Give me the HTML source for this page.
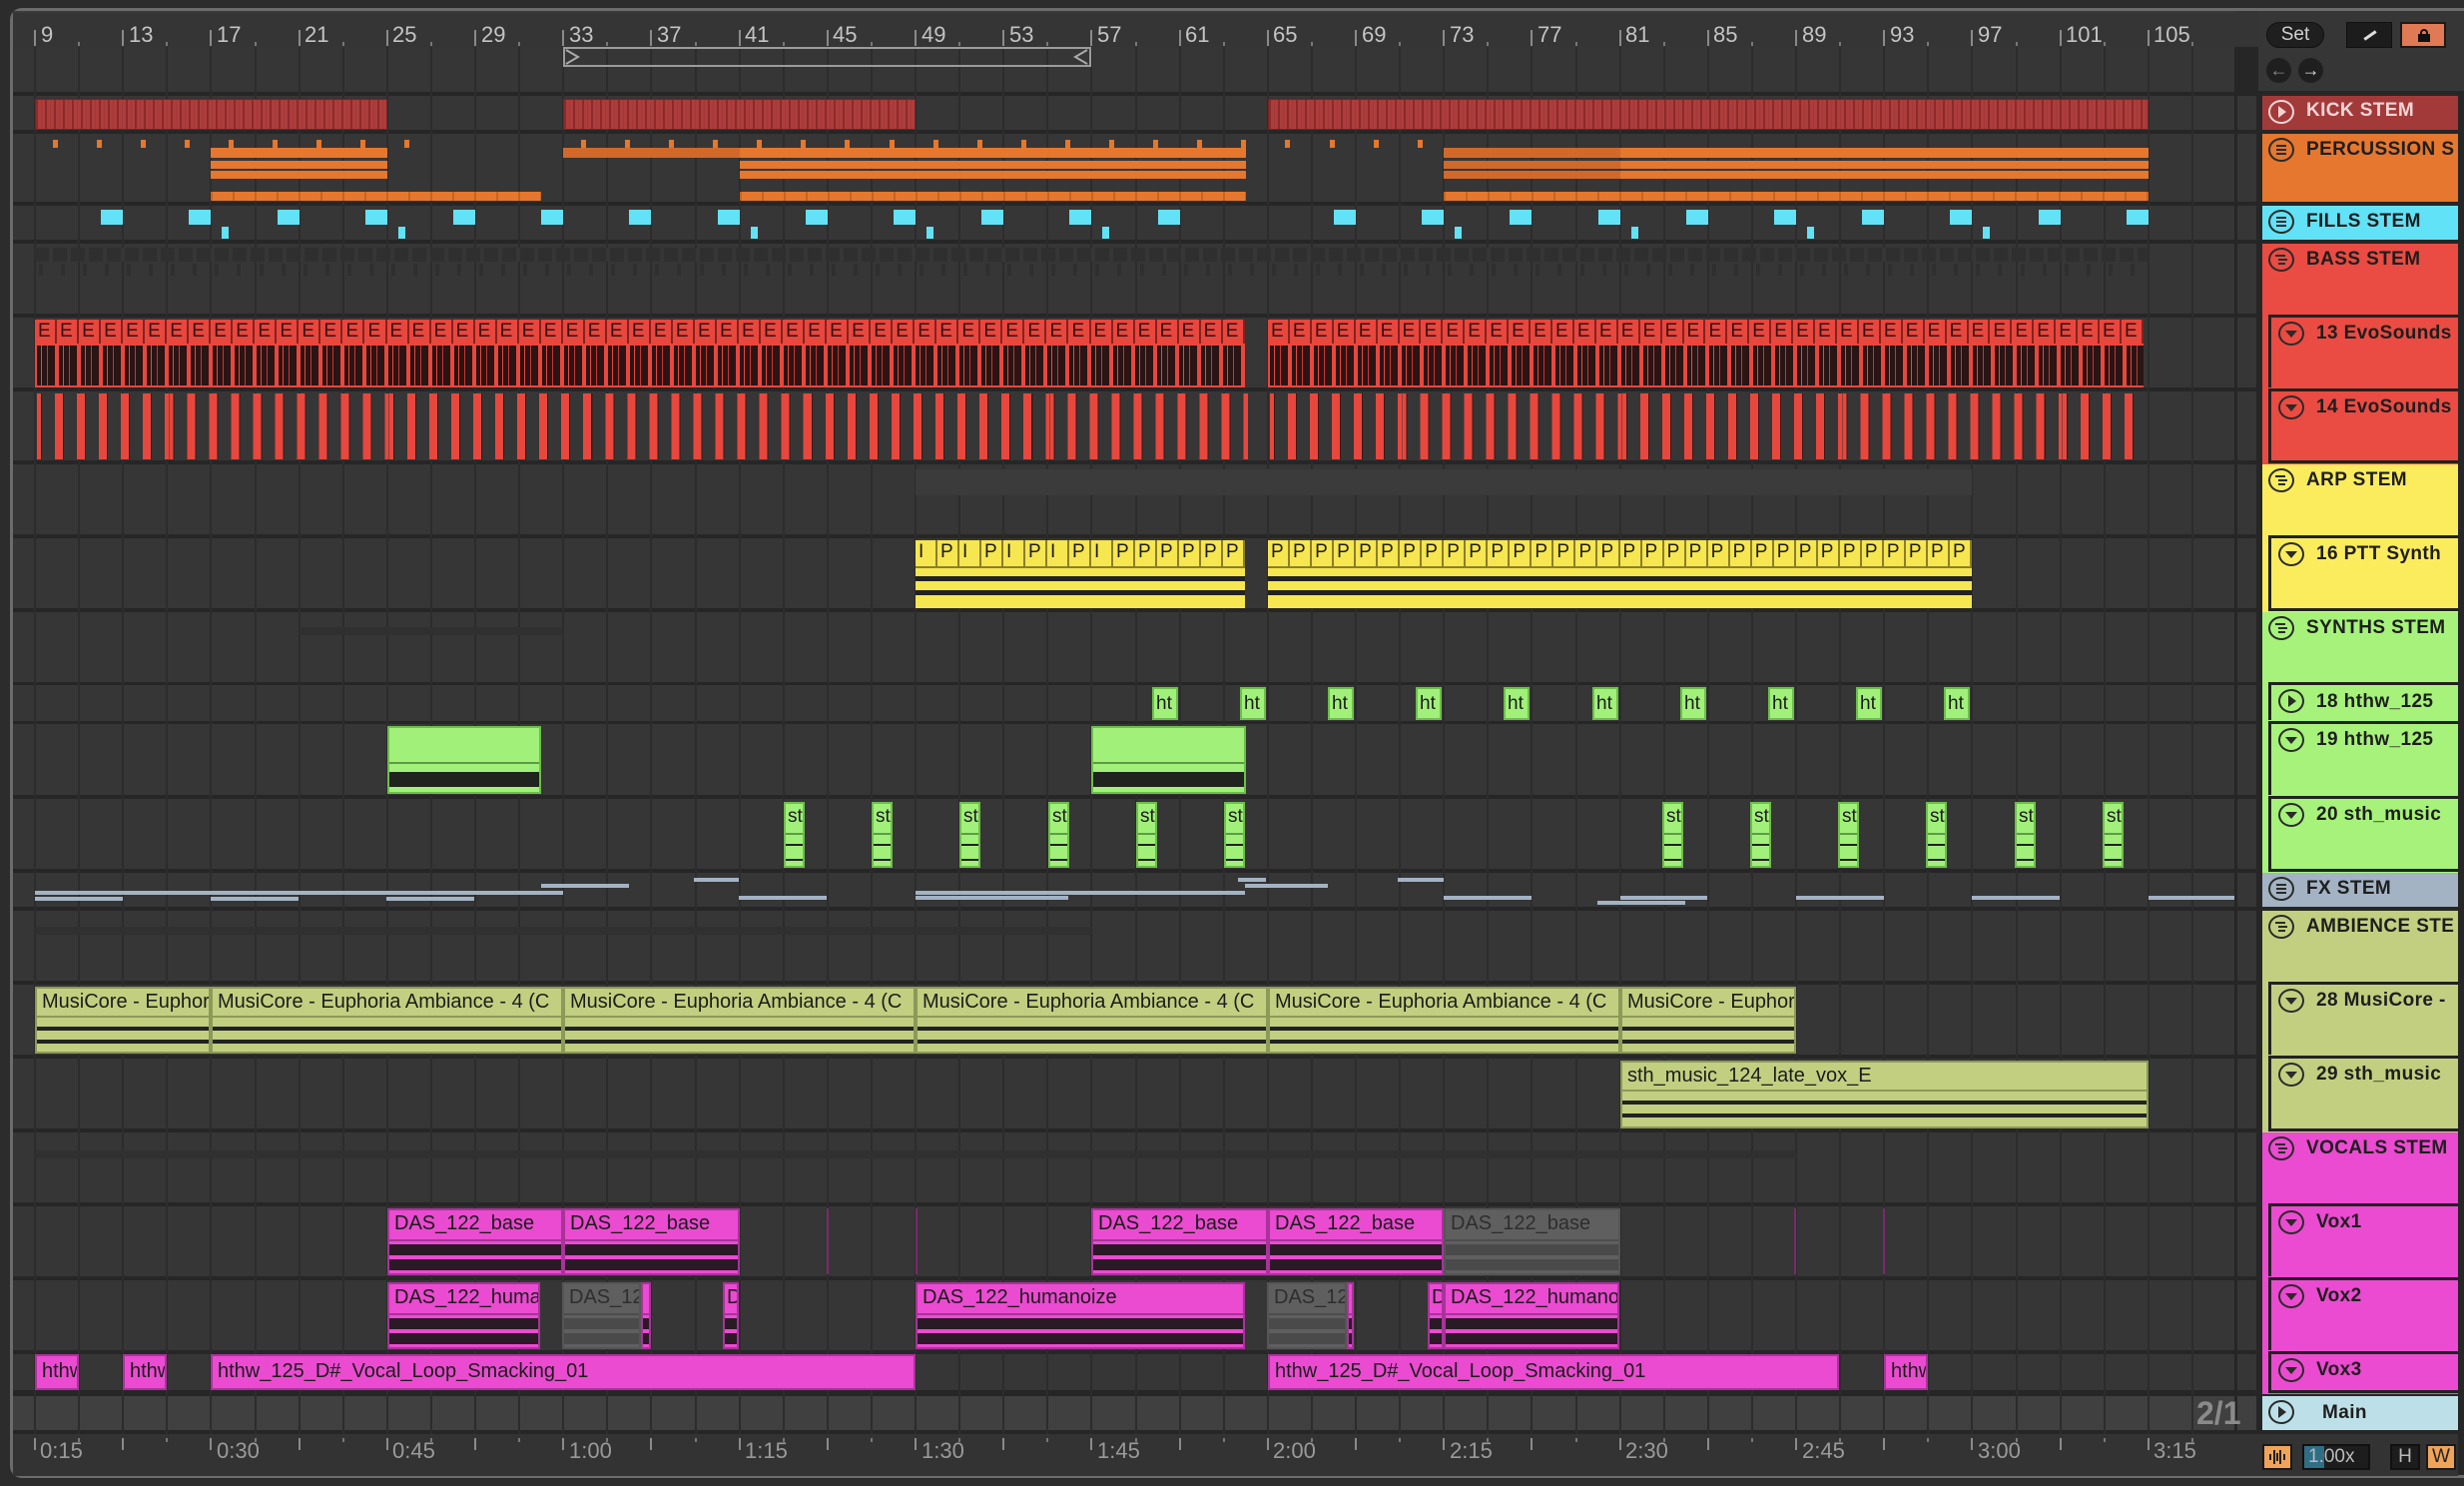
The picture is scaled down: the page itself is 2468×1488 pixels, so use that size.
<!DOCTYPE html>
<html><head><meta charset="utf-8">
<style>
*{margin:0;padding:0;box-sizing:border-box}
body{width:2468px;height:1488px;background:#2c2c2c;position:relative;overflow:hidden;font-family:"Liberation Sans Narrow","Liberation Sans",sans-serif}
.a{position:absolute}
.c{position:absolute;overflow:hidden;white-space:nowrap;font-size:20px;color:#1c1c1c;line-height:26px}
.lab{padding-left:5px;height:27px}
.h{position:absolute;overflow:hidden;white-space:nowrap;font-family:"Liberation Sans","DejaVu Sans",sans-serif;font-weight:bold;font-size:19px;color:#1e1e1e;letter-spacing:.4px}
.rl{position:absolute;top:22px;font-size:22px;color:#c4c4c4;font-family:"Liberation Sans Narrow","Liberation Sans",sans-serif}
.tl{position:absolute;top:1440px;font-size:22px;color:#9a9a9a}
.flex{display:flex}
.flex i{flex:1;font-style:normal;border-right:2px solid rgba(90,20,20,.7);padding-left:3px;height:24px;line-height:24px;overflow:hidden}
</style></head><body>
<div class="a" style="left:10px;top:8px;width:2470px;height:1472px;border:3px solid #6c6c6c;border-right:none;border-radius:12px 0 0 12px;background:#262626"></div>
<div class="a" id="ruler" style="left:13px;top:11px;width:2250px;height:36px;background:#353535"></div>
<div class="a" style="left:2262px;top:11px;width:206px;height:80px;background:#363636"></div>
<div id="g"></div>

<span class="rl" style="left:41px">9</span><span class="rl" style="left:129px">13</span><span class="rl" style="left:217px">17</span><span class="rl" style="left:305px">21</span><span class="rl" style="left:393px">25</span><span class="rl" style="left:482px">29</span><span class="rl" style="left:570px">33</span><span class="rl" style="left:658px">37</span><span class="rl" style="left:746px">41</span><span class="rl" style="left:834px">45</span><span class="rl" style="left:923px">49</span><span class="rl" style="left:1011px">53</span><span class="rl" style="left:1099px">57</span><span class="rl" style="left:1187px">61</span><span class="rl" style="left:1275px">65</span><span class="rl" style="left:1364px">69</span><span class="rl" style="left:1452px">73</span><span class="rl" style="left:1540px">77</span><span class="rl" style="left:1628px">81</span><span class="rl" style="left:1716px">85</span><span class="rl" style="left:1805px">89</span><span class="rl" style="left:1893px">93</span><span class="rl" style="left:1981px">97</span><span class="rl" style="left:2069px">101</span><span class="rl" style="left:2157px">105</span>

<span class="tl" style="left:40px">0:15</span><span class="tl" style="left:217px">0:30</span><span class="tl" style="left:393px">0:45</span><span class="tl" style="left:570px">1:00</span><span class="tl" style="left:746px">1:15</span><span class="tl" style="left:923px">1:30</span><span class="tl" style="left:1099px">1:45</span><span class="tl" style="left:1275px">2:00</span><span class="tl" style="left:1452px">2:15</span><span class="tl" style="left:1628px">2:30</span><span class="tl" style="left:1805px">2:45</span><span class="tl" style="left:1981px">3:00</span><span class="tl" style="left:2157px">3:15</span>

<!-- 13 EvoSounds -->
<div class="c flex" style="left:35px;top:320px;width:1212px;height:68px;background:#e8473e;font-size:19px;color:#3a1010"><i>E</i><i>E</i><i>E</i><i>E</i><i>E</i><i>E</i><i>E</i><i>E</i><i>E</i><i>E</i><i>E</i><i>E</i><i>E</i><i>E</i><i>E</i><i>E</i><i>E</i><i>E</i><i>E</i><i>E</i><i>E</i><i>E</i><i>E</i><i>E</i><i>E</i><i>E</i><i>E</i><i>E</i><i>E</i><i>E</i><i>E</i><i>E</i><i>E</i><i>E</i><i>E</i><i>E</i><i>E</i><i>E</i><i>E</i><i>E</i><i>E</i><i>E</i><i>E</i><i>E</i><i>E</i><i>E</i><i>E</i><i>E</i><i>E</i><i>E</i><i>E</i><i>E</i><i>E</i><i>E</i><i>E</i></div>
<div class="c flex" style="left:1270px;top:320px;width:877px;height:68px;background:#e8473e;font-size:19px;color:#3a1010"><i>E</i><i>E</i><i>E</i><i>E</i><i>E</i><i>E</i><i>E</i><i>E</i><i>E</i><i>E</i><i>E</i><i>E</i><i>E</i><i>E</i><i>E</i><i>E</i><i>E</i><i>E</i><i>E</i><i>E</i><i>E</i><i>E</i><i>E</i><i>E</i><i>E</i><i>E</i><i>E</i><i>E</i><i>E</i><i>E</i><i>E</i><i>E</i><i>E</i><i>E</i><i>E</i><i>E</i><i>E</i><i>E</i><i>E</i><i>E</i></div>
<div class="a evw" style="left:35px;top:346px;width:1212px;height:40px"></div>
<div class="a evw" style="left:1270px;top:346px;width:877px;height:40px"></div>

<!-- 16 PTT -->
<div class="c flex ptt" style="left:917px;top:541px;width:330px;height:68px"><i>I</i><i>P</i><i>I</i><i>P</i><i>I</i><i>P</i><i>I</i><i>P</i><i>I</i><i>P</i><i>P</i><i>P</i><i>P</i><i>P</i><i>P</i></div>
<div class="c flex ptt" style="left:1270px;top:541px;width:705px;height:68px"><i>P</i><i>P</i><i>P</i><i>P</i><i>P</i><i>P</i><i>P</i><i>P</i><i>P</i><i>P</i><i>P</i><i>P</i><i>P</i><i>P</i><i>P</i><i>P</i><i>P</i><i>P</i><i>P</i><i>P</i><i>P</i><i>P</i><i>P</i><i>P</i><i>P</i><i>P</i><i>P</i><i>P</i><i>P</i><i>P</i><i>P</i><i>P</i></div>

<div class="c ht" style="left:1154px">ht</div><div class="c ht" style="left:1242px">ht</div><div class="c ht" style="left:1330px">ht</div><div class="c ht" style="left:1418px">ht</div><div class="c ht" style="left:1506px">ht</div><div class="c ht" style="left:1595px">ht</div><div class="c ht" style="left:1683px">ht</div><div class="c ht" style="left:1771px">ht</div><div class="c ht" style="left:1859px">ht</div><div class="c ht" style="left:1947px">ht</div>

<div class="c st" style="left:785px">st</div><div class="c st" style="left:873px">st</div><div class="c st" style="left:961px">st</div><div class="c st" style="left:1050px">st</div><div class="c st" style="left:1138px">st</div><div class="c st" style="left:1226px">st</div><div class="c st" style="left:1665px">st</div><div class="c st" style="left:1753px">st</div><div class="c st" style="left:1841px">st</div><div class="c st" style="left:1929px">st</div><div class="c st" style="left:2018px">st</div><div class="c st" style="left:2106px">st</div>

<div class="c mc" style="left:35px;width:176px"><div class="lab">MusiCore - Euphoria Ambiance - 4 (C</div></div>
<div class="c mc" style="left:211px;width:353px"><div class="lab">MusiCore - Euphoria Ambiance - 4 (C</div></div>
<div class="c mc" style="left:564px;width:353px"><div class="lab">MusiCore - Euphoria Ambiance - 4 (C</div></div>
<div class="c mc" style="left:917px;width:353px"><div class="lab">MusiCore - Euphoria Ambiance - 4 (C</div></div>
<div class="c mc" style="left:1270px;width:353px"><div class="lab">MusiCore - Euphoria Ambiance - 4 (C</div></div>
<div class="c mc" style="left:1623px;width:176px"><div class="lab">MusiCore - Euphoria Ambiance - 4 (C</div></div>
<div class="c mc" style="left:1623px;width:529px;top:1062px;height:68px"><div class="lab">sth_music_124_late_vox_E</div></div>

<div class="c vx" style="left:388px;width:176px;top:1210px"><div class="lab">DAS_122_base</div></div>
<div class="c vx" style="left:564px;width:177px;top:1210px"><div class="lab">DAS_122_base</div></div>
<div class="c vx" style="left:1093px;width:177px;top:1210px"><div class="lab">DAS_122_base</div></div>
<div class="c vx" style="left:1270px;width:176px;top:1210px"><div class="lab">DAS_122_base</div></div>
<div class="c vx gr" style="left:1446px;width:177px;top:1210px"><div class="lab">DAS_122_base</div></div>
<div class="c vx" style="left:388px;width:153px;top:1284px"><div class="lab">DAS_122_humanoize</div></div>
<div class="c vx gr" style="left:563px;width:79px;top:1284px"><div class="lab">DAS_122_humanoize</div></div>
<div class="c vx" style="left:642px;width:10px;top:1284px"><div class="lab"></div></div>
<div class="c vx" style="left:724px;width:16px;top:1284px"><div class="lab" style="padding-left:2px">D</div></div>
<div class="c vx" style="left:917px;width:330px;top:1284px"><div class="lab">DAS_122_humanoize</div></div>
<div class="c vx gr" style="left:1269px;width:80px;top:1284px"><div class="lab">DAS_122_humanoize</div></div>
<div class="c vx" style="left:1349px;width:7px;top:1284px"><div class="lab"></div></div>
<div class="c vx" style="left:1430px;width:16px;top:1284px"><div class="lab" style="padding-left:2px">D</div></div>
<div class="c vx" style="left:1446px;width:176px;top:1284px"><div class="lab">DAS_122_humanoize</div></div>
<div class="c v3" style="left:35px;width:44px">hthw_125_D#_Vocal_Loop_Smacking_01</div>
<div class="c v3" style="left:123px;width:44px">hthw_125_D#_Vocal_Loop_Smacking_01</div>
<div class="c v3" style="left:211px;width:706px">hthw_125_D#_Vocal_Loop_Smacking_01</div>
<div class="c v3" style="left:1270px;width:572px">hthw_125_D#_Vocal_Loop_Smacking_01</div>
<div class="c v3" style="left:1887px;width:44px">hthw_125_D#_Vocal_Loop_Smacking_01</div>

<div class="a" style="left:2200px;top:1398px;font-family:'Liberation Sans',sans-serif;font-weight:bold;font-size:32px;color:#8a8a8a;line-height:34px">2/1</div>

<div id="hd"></div>
<div class="h" style="left:2310px;top:100px;color:#f2d4d4">KICK STEM</div>
<div class="h" style="left:2310px;top:139px">PERCUSSION S</div>
<div class="h" style="left:2310px;top:211px">FILLS STEM</div>
<div class="h" style="left:2310px;top:249px">BASS STEM</div>
<div class="h" style="left:2320px;top:323px">13 EvoSounds</div>
<div class="h" style="left:2320px;top:397px">14 EvoSounds</div>
<div class="h" style="left:2310px;top:470px">ARP STEM</div>
<div class="h" style="left:2320px;top:544px">16 PTT Synth</div>
<div class="h" style="left:2310px;top:618px">SYNTHS STEM</div>
<div class="h" style="left:2320px;top:692px">18 hthw_125</div>
<div class="h" style="left:2320px;top:730px">19 hthw_125</div>
<div class="h" style="left:2320px;top:805px">20 sth_music</div>
<div class="h" style="left:2310px;top:879px">FX STEM</div>
<div class="h" style="left:2310px;top:917px">AMBIENCE STE</div>
<div class="h" style="left:2320px;top:991px">28 MusiCore -</div>
<div class="h" style="left:2320px;top:1065px">29 sth_music</div>
<div class="h" style="left:2310px;top:1139px">VOCALS STEM</div>
<div class="h" style="left:2320px;top:1213px">Vox1</div>
<div class="h" style="left:2320px;top:1287px">Vox2</div>
<div class="h" style="left:2320px;top:1361px">Vox3</div>
<div class="h" style="left:2326px;top:1404px">Main</div>

<div class="a" style="left:2270px;top:22px;width:58px;height:26px;border-radius:13px;background:#1f1f1f;border:1px solid #111;color:#d0d0d0;font-family:'Liberation Sans',sans-serif;font-size:19px;text-align:center;line-height:24px">Set</div>
<div class="a" style="left:2350px;top:22px;width:46px;height:26px;background:#1c1c1c;border:1px solid #111"><div class="a" style="left:16px;top:11px;width:14px;height:3px;background:#ddd;transform:rotate(-35deg)"></div></div>
<div class="a" style="left:2404px;top:22px;width:46px;height:26px;background:#e07a55;border:2px solid #1a1a1a"><div class="a" style="left:16px;top:10px;width:12px;height:8px;background:#111"></div><div class="a" style="left:18px;top:5px;width:8px;height:7px;border:2px solid #111;border-bottom:none;border-radius:4px 4px 0 0"></div></div>
<div class="a" style="left:2270px;top:58px;width:25px;height:25px;border-radius:50%;background:#1f1f1f;color:#888;font-size:18px;text-align:center;line-height:24px">←</div>
<div class="a" style="left:2302px;top:58px;width:25px;height:25px;border-radius:50%;background:#1f1f1f;color:#ddd;font-size:18px;text-align:center;line-height:24px">→</div>

<div class="a" style="left:2266px;top:1446px;width:30px;height:26px;background:#f0a45a;border:2px solid #1a1a1a"><svg width="26" height="22" style="position:absolute;left:0;top:0"><path d="M6 8V14M10 4V18M13 7V15M16 4V18M20 8V14" stroke="#222" stroke-width="2"/></svg></div>
<div class="a" style="left:2306px;top:1446px;width:68px;height:26px;background:#1d1d1d;border:2px solid #111"><div class="a" style="left:0;top:0;width:20px;height:22px;background:#2f6f86"></div><span class="a" style="left:4px;top:0;font-family:'Liberation Sans',sans-serif;font-size:19px;color:#bbb;line-height:22px">1.00x</span></div>
<div class="a" style="left:2394px;top:1446px;width:30px;height:26px;background:#1d1d1d;border:2px solid #111;color:#bbb;font-family:'Liberation Sans',sans-serif;font-size:19px;text-align:center;line-height:22px">H</div>
<div class="a" style="left:2430px;top:1446px;width:30px;height:26px;background:#f0a45a;border:2px solid #1a1a1a;color:#222;font-family:'Liberation Sans',sans-serif;font-size:19px;text-align:center;line-height:22px">W</div>

<style>
.evw{background:repeating-linear-gradient(90deg,#e8473e 0 2px,#2a1414 2px 6px,#e8473e 6px 7px,#2a1414 7px 12px,#c33 12px 13px,#2a1414 13px 20px,#e8473e 20px 22px)}
.ptt{background:linear-gradient(180deg,#f6e650 0 26px,#8a7f2c 26px 28px,#f6e650 28px 36px,#222 36px 41px,#f6e650 41px 50px,#222 50px 55px,#f6e650 55px);font-size:19px}
.ptt i{border-right:2px solid #8a7f2c;height:26px}
.ht{top:688px;width:26px;height:33px;background:#a1f07a;border:2px solid #6dbf4b;font-size:19px;padding-left:2px;line-height:30px}
.st{top:803px;width:21px;height:66px;border:2px solid #6dbf4b;font-size:19px;padding-left:2px;background:linear-gradient(180deg,#a1f07a 0 29px,#5d9a46 29px 31px,#a1f07a 31px 40px,#222 40px 42px,#a1f07a 42px 55px,#222 55px 57px,#a1f07a 57px)}
.mc{top:988px;height:67px;border:2px solid #8c9958;background:linear-gradient(180deg,#c2cf80 0 27px,#8c9958 27px 29px,#c2cf80 29px 38px,#222 38px 42px,#c2cf80 42px 51px,#222 51px 55px,#c2cf80 55px)}
.vx{height:67px;border:2px solid #a8339a;background:linear-gradient(180deg,#ea4bd0 0 29px,#a8339a 29px 31px,#ea4bd0 31px 34px,#2a1a26 34px 45px,#ea4bd0 45px 49px,#2a1a26 49px 60px,#ea4bd0 60px)}
.vx.gr{border-color:#555;background:linear-gradient(180deg,#5f5f5f 0 29px,#4d4d4d 29px 31px,#5f5f5f 31px 34px,#4a4a4a 34px 45px,#5f5f5f 45px 49px,#4a4a4a 49px 60px,#5f5f5f 60px);color:#2e2e2e}
.v3{top:1356px;height:36px;background:#ea4bd0;border:2px solid #a8339a;padding-left:5px;line-height:30px}
</style>

<script>
function X(b){return 35+(b-9)*22.05}
function R(x,y,w,h,bg,ex,parent){var d=document.createElement('div');d.className='a';d.style.cssText='left:'+x+'px;top:'+y+'px;width:'+w+'px;height:'+h+'px;background:'+bg+';'+(ex||'');(parent||document.getElementById('g')).appendChild(d);return d}
var rows=[[96,130],[134,202],[206,240],[244,314],[318,388],[392,461],[465,535],[539,609],[613,683],[686,722],[725,796],[800,870],[874,908],[912,982],[986,1056],[1060,1130],[1134,1204],[1208,1278],[1282,1352],[1356,1392],[1398,1432]];
R(13,47,2225,45,'#363636');
rows.forEach(function(r,i){R(13,r[0],2225,r[1]-r[0],i==20?'#404040':'#363636');R(2241,r[0],19,r[1]-r[0],i==20?'#404040':'#363636');});
R(13,1436,2449,42,'#333333');
for(var b=9;b<=109;b+=2){var x=X(b);if(x>2236)break;
 R(x-1,47,2,1389,'#2c2c2c');
 if((b-9)%4==0){R(x-1,30,2,16,'#8a8a8a');R(x-1,1440,2,12,'#8a8a8a');}
 else{R(x-1,42,2,4,'#777');R(x-1,1440,2,4,'#777');}
}
R(13,11,2225,2,'#3a3a3a');
var lb=R(X(33),47,X(57)-X(33),20,'transparent','border:2px solid #9c9c9c');
lb.innerHTML='<svg width="16" height="18" style="position:absolute;left:0;top:0"><path d="M1 1 L13 8 L1 15" stroke="#aaa" stroke-width="2" fill="none"/></svg><svg width="16" height="18" style="position:absolute;right:0;top:0"><path d="M14 1 L2 8 L14 15" stroke="#aaa" stroke-width="2" fill="none"/></svg>';
[[9,25],[33,49],[65,105]].forEach(function(s){R(X(s[0]),99,X(s[1])-X(s[0]),31,'repeating-linear-gradient(90deg,#8c2a2a 0 2px,#ad3d3d 2px 5px,#a33838 5px 6px,#ad3d3d 6px 9px)','border:1px solid #7a2222')});
var O='#e5772e',OD='#d0692a';
var mk=[];for(var b=9.8;b<26;b+=2)mk.push(b);for(var b=33.8;b<64;b+=2)mk.push(b);for(var b=65.8;b<72;b+=2)mk.push(b);
mk.forEach(function(b){R(X(b),140,5,8,O)});
function stack(a,b,c){R(X(a),148,X(b)-X(a),10,c||O);R(X(a),161,X(b)-X(a),8,c||O);R(X(a),171,X(b)-X(a),8,c||O);}
stack(17,25);R(X(33),148,X(41)-X(33),10,OD);stack(41,64);stack(73,105,OD);stack(81,105);
function strip(a,b){R(X(a),192,X(b)-X(a),9,'repeating-linear-gradient(90deg,#c9641f 0 2px,'+O+' 2px 22px)')}
strip(17,32);strip(41,64);strip(73,105);
for(var b=12;b<=104;b+=4){if(b==64)continue;R(X(b),210,22,15,'#62e2f6')}
[17.5,25.5,41.5,49.5,57.5,73.5,81.5,89.5,97.5].forEach(function(b){R(X(b),227,7,12,'#62e2f6')});
R(X(9),248,X(105)-X(9),14,'repeating-linear-gradient(90deg,#2f2f2f 0 14px,#363636 14px 18px)');
for(var b=9;b<105;b+=1)R(X(b)+4,264,4,12,'#2f2f2f');
[[9,64],[65,104.6]].forEach(function(s){R(X(s[0])+2,394,X(s[1])-X(s[0]),66,'repeating-linear-gradient(90deg,#e8473e 0 4px,#3a1a18 4px 5px,transparent 5px 18px,#e8473e 18px 22px,transparent 22px 22.05px)')});
R(X(49),470,X(97)-X(49),26,'#3b3b3b');
R(X(21),628,X(33)-X(21),8,'#303030');
[[25,32],[57,64]].forEach(function(s){R(X(s[0]),727,X(s[1])-X(s[0]),68,'linear-gradient(180deg,#a1f07a 0 34px,#5d9a46 34px 36px,#a1f07a 36px 44px,#1f241e 44px 59px,#a1f07a 59px)','border:2px solid #6dbf4b')});
var F='#a3b3c4';
[[35,564,892],[35,123,898],[211,299,898],[387,475,898],[542,630,885],[695,740,879],[740,828,897],[917,1247,892],[917,1070,897],[1240,1268,879],[1247,1330,885],[1400,1446,879],[1446,1534,897],[1600,1688,902],[1623,1710,897],[1799,1887,897],[1975,2063,897],[2152,2238,897]].forEach(function(l){R(l[0],l[2],l[1]-l[0],4,F)});
R(X(9),928,X(57)-X(9),8,'#303030');R(X(9),1152,X(89)-X(9),8,'#303030');
[828,917,1797,1886].forEach(function(x){R(x,1210,2,66,'#7a2a6e')});
var H=document.getElementById('hd');
function hdr(y1,y2,c,ind,pc,icon){
 if(ind){R(2266,y1-4,196,y2-y1+8,pc,'',H);R(2272,y1-3,190,y2-y1+6,'#222','',H);R(2275,y1,187,y2-y1,c,'',H);var ic=R(2282,y1+4,26,24,'transparent','border:2px solid #2a2a2a;border-radius:50%',H);}
 else{R(2266,y1,196,y2-y1,c,'',H);var ic=R(2272,y1+4,26,24,'transparent','border:2px solid '+(icon=='pk'?'#f2d4d4':'#2a2a2a')+';border-radius:50%',H);}
 var col=icon=='pk'?'#f2d4d4':'#2a2a2a';
 if(icon=='play'||icon=='pk')ic.innerHTML='<svg width="22" height="20" style="position:absolute;left:0;top:0"><path d="M8 4 L16 10 L8 16Z" fill="'+col+'"/></svg>';
 else if(icon=='down')ic.innerHTML='<svg width="22" height="20" style="position:absolute;left:0;top:0"><path d="M5 7 L17 7 L11 14Z" fill="'+col+'"/></svg>';
 else if(icon=='eq')ic.innerHTML='<svg width="22" height="20" style="position:absolute;left:0;top:0"><path d="M6 6H16M6 10H16M6 14H16" stroke="'+col+'" stroke-width="2"/></svg>';
 else ic.innerHTML='<svg width="22" height="20" style="position:absolute;left:0;top:0"><path d="M5 6H15M8 10H17M8 14H15" stroke="'+col+'" stroke-width="2"/></svg>';
}
R(2262,92,206,1344,'#262626','',H);
hdr(96,130,'#a33a3a',0,0,'pk');
hdr(134,202,'#e5772e',0,0,'eq');
hdr(206,240,'#62e2f6',0,0,'eq');
hdr(244,314,'#ea4b42',0,0,'grp');R(2266,314,10,152,'#ea4b42','',H);
hdr(318,388,'#ea4b42',1,'#ea4b42','down');hdr(392,461,'#ea4b42',1,'#ea4b42','down');
hdr(465,535,'#fbec5e',0,0,'grp');R(2266,535,10,74,'#fbec5e','',H);
hdr(539,609,'#fbec5e',1,'#fbec5e','down');
hdr(613,683,'#a6f27a',0,0,'grp');R(2266,683,10,187,'#a6f27a','',H);
hdr(686,722,'#a6f27a',1,'#a6f27a','play');hdr(725,796,'#a6f27a',1,'#a6f27a','down');hdr(800,870,'#a6f27a',1,'#a6f27a','down');
hdr(874,908,'#a3b3c4',0,0,'eq');
hdr(912,982,'#c2cf80',0,0,'grp');R(2266,982,10,148,'#c2cf80','',H);
hdr(986,1056,'#c2cf80',1,'#c2cf80','down');hdr(1060,1130,'#c2cf80',1,'#c2cf80','down');
hdr(1134,1204,'#ea4bd0',0,0,'grp');R(2266,1204,10,188,'#ea4bd0','',H);
hdr(1208,1278,'#ea4bd0',1,'#ea4bd0','down');hdr(1282,1352,'#ea4bd0',1,'#ea4bd0','down');hdr(1356,1392,'#ea4bd0',1,'#ea4bd0','down');
hdr(1398,1432,'#bde0e8',0,0,'play');
</script>
</body></html>
